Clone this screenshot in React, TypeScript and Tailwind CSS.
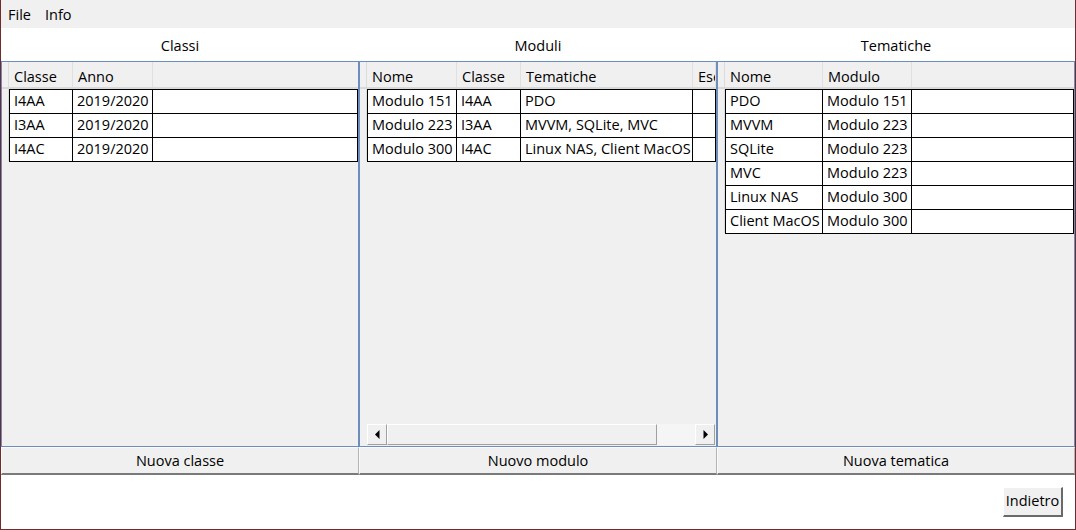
import React from 'react';

type Col = { label: string; w: string };

const classiCols: Col[] = [
  { label: 'Classe', w: 'w-[64px]' },
  { label: 'Anno', w: 'w-[80px]' },
];
const classiRows = [
  ['I4AA', '2019/2020'],
  ['I3AA', '2019/2020'],
  ['I4AC', '2019/2020'],
];

const moduliCols: Col[] = [
  { label: 'Nome', w: 'w-[90px]' },
  { label: 'Classe', w: 'w-[64px]' },
  { label: 'Tematiche', w: 'w-[172px]' },
  { label: 'Ese', w: 'w-[23px]' },
];
const moduliRows = [
  ['Modulo 151', 'I4AA', 'PDO', ''],
  ['Modulo 223', 'I3AA', 'MVVM, SQLite, MVC', ''],
  ['Modulo 300', 'I4AC', 'Linux NAS, Client MacOS', ''],
];

const tematicheCols: Col[] = [
  { label: 'Nome', w: 'w-[98px]' },
  { label: 'Modulo', w: 'w-[89px]' },
];
const tematicheRows = [
  ['PDO', 'Modulo 151'],
  ['MVVM', 'Modulo 223'],
  ['SQLite', 'Modulo 223'],
  ['MVC', 'Modulo 223'],
  ['Linux NAS', 'Modulo 300'],
  ['Client MacOS', 'Modulo 300'],
];

function Grid({ cols, rows, scroll }: { cols: Col[]; rows: string[][]; scroll?: boolean }) {
  return (
    <div className="flex flex-col h-full border border-[#6d8ebd] bg-[#f0f0f0] overflow-hidden">
      <div className="flex-1 overflow-hidden">
        {/* header */}
        <div className="flex h-[27px] border-b-[2px] border-[#d9d9d9] bg-[#f0f0f0] whitespace-nowrap">
          <div className="w-[7px] shrink-0 border-r border-[#dcdcdc]" />
          {cols.map((c) => (
            <div key={c.label} className={`${c.w} shrink-0 pl-[5px] pt-[4px] border-r border-[#e0e0e0] overflow-hidden`}>
              {c.label}
            </div>
          ))}
          <div className="flex-1" />
        </div>
        {/* rows */}
        <div>
          {rows.map((r, i) => (
            <div key={i} className="flex h-[24px] whitespace-nowrap">
              <div className="w-[7px] shrink-0 border-r border-[#dcdcdc]" />
              <div className={`flex flex-1 bg-white border-t border-black ${i === rows.length - 1 ? 'border-b h-[25px]' : ''}`}>
                {cols.map((c, j) => (
                  <div
                    key={j}
                    className={`${c.w} shrink-0 pl-[4px] leading-[22px] border-r border-black ${j === 0 ? 'border-l' : ''} overflow-hidden`}
                  >
                    {r[j]}
                  </div>
                ))}
                <div className="flex-1 border-r border-black" />
              </div>
            </div>
          ))}
        </div>
      </div>
      {scroll && (
        <div className="flex h-[22px] pl-[7px] pr-[1px] pb-[1px] items-stretch">
          <div className="w-[20px] flex items-center justify-center bg-[#f0f0f0] border-t border-l border-white border-r border-b border-r-[#a0a0a0] border-b-[#a0a0a0]">
            <svg width="5" height="9" viewBox="0 0 5 9">
              <path d="M4.5 0 L0 4.5 L4.5 9 Z" fill="#000" />
            </svg>
          </div>
          <div className="w-[270px] bg-[#f0f0f0] border-t border-l border-white border-r border-b border-r-[#a0a0a0] border-b-[#a0a0a0]" />
          <div className="flex-1 bg-[#f5f5f5]" />
          <div className="w-[20px] flex items-center justify-center bg-[#f0f0f0] border-t border-l border-white border-r border-b border-r-[#a0a0a0] border-b-[#a0a0a0]">
            <svg width="5" height="9" viewBox="0 0 5 9">
              <path d="M0.5 0 L5 4.5 L0.5 9 Z" fill="#000" />
            </svg>
          </div>
        </div>
      )}
    </div>
  );
}

function WideButton({ label }: { label: string }) {
  return (
    <div className="flex items-center justify-center pt-[1px] bg-[#f0f0f0] border-t border-l border-[#fafafa] border-r border-r-[#b4b4b4] border-b-2 border-b-[#7a7a7a]">
      {label}
    </div>
  );
}

export default function App() {
  return (
    <div className="w-[1076px] h-[530px] flex flex-col bg-white border-l border-r border-b border-[#702c2c] text-[14.5px] text-black font-['Segoe_UI','Open_Sans',sans-serif] overflow-hidden">
      {/* menu */}
      <div className="h-[28px] shrink-0 bg-[#f0f0f0] flex items-center gap-[14px] pl-[7px] pt-[2px]">
        <span>File</span>
        <span>Info</span>
      </div>

      {/* titles */}
      <div className="h-[33px] shrink-0 grid grid-cols-3 items-center text-center pt-[2px]">
        <div>Classi</div>
        <div>Moduli</div>
        <div>Tematiche</div>
      </div>

      {/* grids */}
      <div className="h-[386px] shrink-0 grid grid-cols-3">
        <Grid cols={classiCols} rows={classiRows} />
        <Grid cols={moduliCols} rows={moduliRows} scroll />
        <Grid cols={tematicheCols} rows={tematicheRows} />
      </div>

      {/* buttons */}
      <div className="h-[28px] shrink-0 grid grid-cols-3">
        <WideButton label="Nuova classe" />
        <WideButton label="Nuovo modulo" />
        <WideButton label="Nuova tematica" />
      </div>

      {/* footer */}
      <div className="flex-1 flex justify-end items-start pt-[12px] pr-[12px]">
        <button className="w-[60px] h-[30px] bg-[#f0f0f0] border-t border-l border-white border-r-2 border-b-2 border-r-[#6a6a6a] border-b-[#6a6a6a] leading-none">
          Indietro
        </button>
      </div>
    </div>
  );
}
